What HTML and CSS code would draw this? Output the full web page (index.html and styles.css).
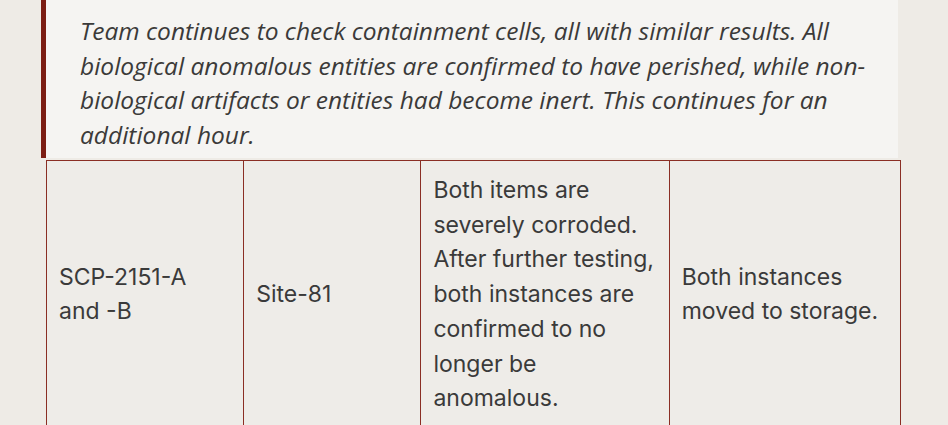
FILE: index.html
```html
<!DOCTYPE html>
<html lang="en">
<head>
<meta charset="utf-8">
<link rel="stylesheet" href="styles.css">
</head>
<body>
<div class="page">
  <blockquote class="quote">
    <p>Team continues to check containment cells, all with similar results. All biological anomalous entities are confirmed to have perished, while non-biological artifacts or entities had become inert. This continues for an additional hour.</p>
  </blockquote>
  <table class="log">
    <colgroup>
      <col class="c1"><col class="c2"><col class="c3"><col class="c4">
    </colgroup>
    <tbody>
      <tr>
        <td>SCP-2151-A and -B</td>
        <td>Site-81</td>
        <td>Both items are severely corroded. After further testing, both instances are confirmed to no longer be anomalous.</td>
        <td>Both instances moved to storage.</td>
      </tr>
    </tbody>
  </table>
</div>
</body>
</html>
```
FILE: styles.css
```css
html, body {
  margin: 0;
  padding: 0;
  background: #eeebe6;
}
.page {
  padding-left: 41px;
  width: 860px;
}
.quote {
  margin: 0;
  width: 798px;
  background: #f5f4f2;
  border-left: 5px solid #7b1d13;
  padding: 14px 20px 6px 34px;
}
.quote p {
  margin: 0;
  font-family: "Open Sans", sans-serif;
  font-style: italic;
  font-size: 24.5px;
  line-height: 34.5px;
  color: #3b3a39;
}
.log {
  margin: 2px 0 0 5px;
  border-collapse: collapse;
  table-layout: fixed;
  width: 855px;
  font-family: Inter, sans-serif;
  font-size: 23px;
  line-height: 34.7px;
  color: #3a3a3a;
}
.c1 { width: 197px; }
.c2 { width: 177px; }
.c3 { width: 248px; }
.c4 { width: 231px; }
.log td {
  border: 1px solid #8a2e24;
  padding: 12px 12px;
  vertical-align: middle;
  background: #eeece8;
}
```
